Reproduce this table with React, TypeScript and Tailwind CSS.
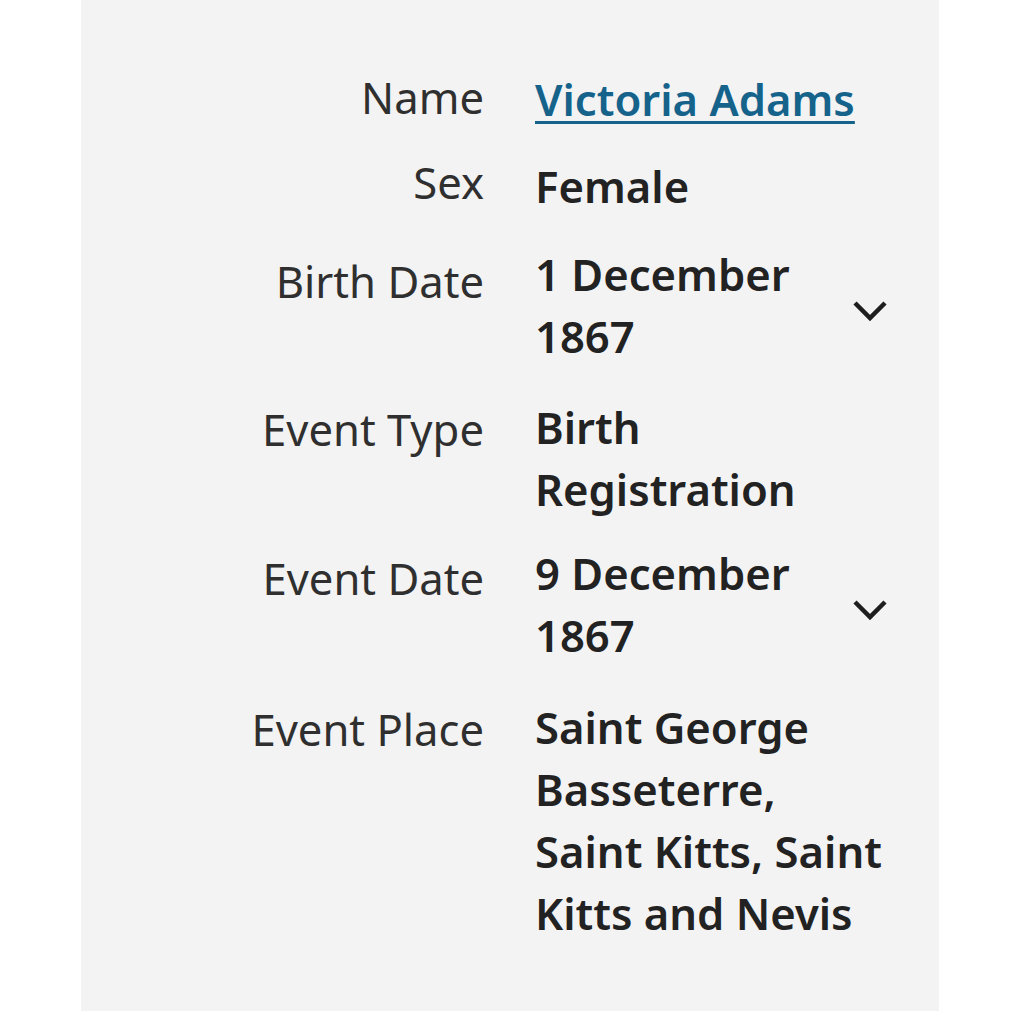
type Row = {
  label: string
  value: string
  link?: boolean
  expand?: boolean
  rowClass: string
  labelClass: string
  valueClass: string
}

// spacing tuned row by row, the labels sit a little off the value baseline
const rows: Row[] = [
  { label: 'Name', value: 'Victoria Adams', link: true, rowClass: 'mt-0', labelClass: 'pt-0', valueClass: 'pt-[2px]' },
  { label: 'Sex', value: 'Female', rowClass: 'mt-[21px]', labelClass: 'pt-0', valueClass: 'pt-[4px]' },
  { label: 'Birth Date', value: '1 December 1867', expand: true, rowClass: 'mt-[26px]', labelClass: 'pt-[7px]', valueClass: 'pt-0' },
  { label: 'Event Type', value: 'Birth Registration', rowClass: 'mt-[29px]', labelClass: 'pt-[2px]', valueClass: 'pt-0' },
  { label: 'Event Date', value: '9 December 1867', expand: true, rowClass: 'mt-[22px]', labelClass: 'pt-[5px]', valueClass: 'pt-0' },
  {
    label: 'Event Place',
    value: 'Saint George Basseterre, Saint Kitts, Saint Kitts and Nevis',
    rowClass: 'mt-[30px]',
    labelClass: 'pt-[2px]',
    valueClass: 'pt-0',
  },
]

function Chevron() {
  return (
    <svg width="36" height="22" viewBox="0 0 36 22" fill="none" className="text-[#1e1e1e]">
      <path d="M3 3 L18 18 L33 3" stroke="currentColor" strokeWidth="4.5" />
    </svg>
  )
}

export default function App() {
  return (
    <div className="min-h-[1023px] bg-white" style={{ fontFamily: '"Noto Sans", "Open Sans", sans-serif' }}>
      <div className="ml-[81px] h-[1011px] w-[858px] bg-[#f3f3f3] pt-[66px] text-[43.6px] leading-[62px]">
        {rows.map((r) => (
          <div key={r.label} className={`flex items-start ${r.rowClass}`}>
            <div className={`w-[403px] shrink-0 text-right text-[#2f2f2f] ${r.labelClass}`}>{r.label}</div>
            <div className={`ml-[51px] ${r.valueClass}`}>
              {r.link ? (
                <a href="#" className="font-semibold text-[#15628b] underline decoration-[3px] underline-offset-[5px]">
                  {r.value}
                </a>
              ) : r.expand ? (
                <div className="flex items-center">
                  <span className="w-[300px] font-semibold text-[#222]">{r.value}</span>
                  <span className="ml-[17px] flex items-center pt-[12px]">
                    <Chevron />
                  </span>
                </div>
              ) : (
                <div className="w-[350px] font-semibold text-[#222]">{r.value}</div>
              )}
            </div>
          </div>
        ))}
      </div>
    </div>
  )
}
